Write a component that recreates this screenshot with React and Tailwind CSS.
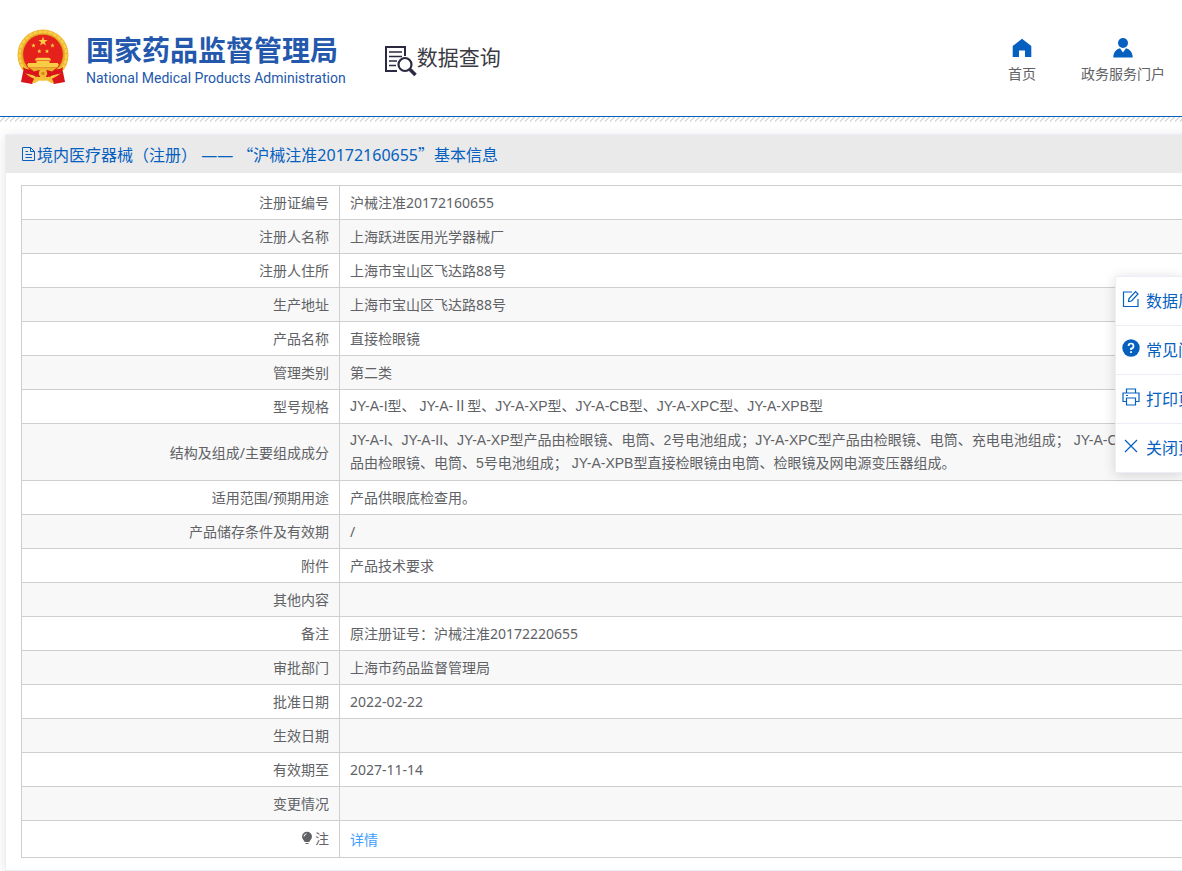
import React from "react";

const rows = [
  ["注册证编号", "沪械注准20172160655"],
  ["注册人名称", "上海跃进医用光学器械厂"],
  ["注册人住所", "上海市宝山区飞达路88号"],
  ["生产地址", "上海市宝山区飞达路88号"],
  ["产品名称", "直接检眼镜"],
  ["管理类别", "第二类"],
  ["型号规格", "JY-A-I型、 JY-A-Ⅱ型、JY-A-XP型、JY-A-CB型、JY-A-XPC型、JY-A-XPB型", true],
  [
    "结构及组成/主要组成成分",
    "JY-A-I、JY-A-II、JY-A-XP型产品由检眼镜、电筒、2号电池组成；JY-A-XPC型产品由检眼镜、电筒、充电电池组成； JY-A-CB型产品由检眼镜、电筒、5号电池组成； JY-A-XPB型直接检眼镜由电筒、检眼镜及网电源变压器组成。",
    true,
  ],
  ["适用范围/预期用途", "产品供眼底检查用。"],
  ["产品储存条件及有效期", "/"],
  ["附件", "产品技术要求"],
  ["其他内容", ""],
  ["备注", "原注册证号：沪械注准20172220655"],
  ["审批部门", "上海市药品监督管理局"],
  ["批准日期", "2022-02-22"],
  ["生效日期", ""],
  ["有效期至", "2027-11-14"],
  ["变更情况", ""],
];

const star = "M0-10 2.4-3.2 9.5-3.1 3.8 1.2 5.9 8.1 0 4 -5.9 8.1 -3.8 1.2 -9.5-3.1 -2.4-3.2Z";

function Emblem() {
  return (
    <svg viewBox="0 0 52 56" className="h-14 w-[52px] shrink-0" aria-hidden="true">
      <path d="M7 38 4 53 15 55 20 50H32L37 55 48 53 45 38Z" fill="#d9141c" />
      <circle cx="26" cy="26" r="25.5" fill="#eeb32c" />
      <circle cx="26" cy="26" r="23.4" fill="none" stroke="#f8cf4a" strokeWidth="2.4" strokeDasharray="4 1" />
      <circle cx="26" cy="25.5" r="20.3" fill="#e4211b" stroke="#dba01f" strokeWidth=".8" />
      <g fill="#f9cc45">
        <path d={star} transform="translate(26 12.5) scale(.5)" />
        <path d={star} transform="translate(16.5 16.5) scale(.24)" />
        <path d={star} transform="translate(35.5 16.5) scale(.24)" />
        <path d={star} transform="translate(22.3 22.3) scale(.24)" />
        <path d={star} transform="translate(30 22.3) scale(.24)" />
        <path d="M18 30.5 20 28.8H32L34 30.5V31.4H18ZM19.500 32H32.500V34H41V35H42L40.500 38.500H11.500L10 35H11V34H19.500Z" />
      </g>
      <path d="M6 38C10 42 17 39 22 43H30C35 39 42 42 46 38L45 44C40 46 36 45 33 48H19C16 45 12 46 7 44Z" fill="#d9141c" />
      <path d="M12 38.500H40L35 42.500 30 41 26 43.500 22 41 17 42.500Z" fill="#e9b02c" />
      <circle cx="26" cy="44.500" r="4.200" fill="#f3bd36" />
      <circle cx="26" cy="44.500" r="1.800" fill="#d58d16" />
      <path d="M17 50 20 47.500 24 49H28L32 47.500 35 50 37 54H34L30 51.500H22L18 54H15Z" fill="#f5c136" />
    </svg>
  );
}

function SearchDocIcon() {
  return (
    <svg viewBox="0 0 32 32" className="h-8 w-8 shrink-0" fill="none" stroke="#2b2a40" aria-hidden="true">
      <path d="M12 26H1V2H20V11" strokeWidth="2" />
      <path d="M4 7H17M4 11.500H17M4 16H12M4 20.500H11" strokeWidth="1.500" />
      <circle cx="20" cy="19.500" r="6.500" strokeWidth="2.200" />
      <path d="M25 24.500 30.500 30" strokeWidth="3.600" />
    </svg>
  );
}

function HomeIcon() {
  return (
    <svg viewBox="0 0 20 20" className="h-5 w-5" fill="#0560bf" aria-hidden="true">
      <path d="M10 .8 19.300 8V19H13V12.500H7V19H.7V8Z" />
    </svg>
  );
}

function UserIcon() {
  return (
    <svg viewBox="0 0 20 20" className="h-5 w-5" fill="#0560bf" aria-hidden="true">
      <circle cx="10" cy="5" r="5" />
      <path d="M.3 19.500C.3 14 3.300 11.200 7 10.200L10 14.500 13 10.200C16.700 11.200 19.700 14 19.700 19.500Z" />
    </svg>
  );
}

function DocumentIcon() {
  return (
    <svg viewBox="0 0 16 16" className="h-4 w-4 shrink-0" fill="none" stroke="#0560bf" aria-hidden="true">
      <path d="M1.500 1.500H9.500L13.500 5.500V14.500H1.500ZM9.500 1.500V5.500H13.500M4.500 5.500H7M4.500 8.500H11M4.500 11.500H11" />
    </svg>
  );
}

function BulbIcon() {
  return (
    <svg viewBox="0 0 12 14" className="h-3.5 w-3" aria-hidden="true">
      <path d="M6 .8A5 5 0 0 1 11 5.800C11 8.200 9 9 8.300 11H3.700C3 9 1 8.200 1 5.800A5 5 0 0 1 6 .8Z" fill="#606266" />
      <path d="M3 5.500A3 3 0 0 1 5.500 2.800" stroke="#fff" fill="none" />
      <path d="M4.500 12.500H7.500" stroke="#606266" />
    </svg>
  );
}

const tools = [
  {
    label: "数据质量",
    icon: (
      <g>
        <path d="M10 2H1.500V16.500H16V9" />
        <path d="M6.500 11.500 7 8.500 13.500 1.500 16 4 9.500 11Z" />
      </g>
    ),
  },
  {
    label: "常见问题",
    icon: (
      <g>
        <circle cx="9" cy="9" r="8.700" fill="#0560bf" stroke="none" />
        <path d="M6.500 7A2.500 2.500 0 1 1 9 9.500V11" stroke="#fff" strokeWidth="1.700" />
        <path d="M9 12.200V14" stroke="#fff" strokeWidth="1.800" />
      </g>
    ),
  },
  {
    label: "打印页面",
    icon: <path d="M4.500 5V1H13.500V5M4.500 13.500H1V5H17V13.500H13.500M4.500 10H13.500V17H4.500ZM4 7.500H6" />,
  },
  { label: "关闭页面", icon: <path d="M3 3 15 15M15 3 3 15" /> },
];

export default function App() {
  return (
    <div className="relative overflow-hidden bg-white font-['Noto_Sans','Noto_Sans_CJK_SC',sans-serif] text-sm text-[#606266]">
      <header className="flex h-[117px] items-start justify-between border-b border-[#0560bf] pr-[17px] pl-[17px]">
        <div className="flex items-start">
          <div className="flex gap-[17px] pt-[29px]">
            <Emblem />
            <div className="pt-1 whitespace-nowrap text-[#2458ac]">
              <h1 className="text-[28px] leading-[35px] font-bold">国家药品监督管理局</h1>
              <p className="font-[Roboto,sans-serif] text-sm leading-5">National Medical Products Administration</p>
            </div>
          </div>
          <div className="ml-[39px] flex pt-[45px]">
            <SearchDocIcon />
            <h2 className="text-[21px] leading-6 whitespace-nowrap text-[#3b3b43]">数据查询</h2>
          </div>
        </div>
        <nav className="flex gap-[45px] pt-[38px]">
          <a href="#home" className="flex flex-col items-center gap-1.5">
            <HomeIcon />
            <span className="leading-5">首页</span>
          </a>
          <a href="#portal" className="flex flex-col items-center gap-1.5">
            <UserIcon />
            <span className="leading-5">政务服务门户</span>
          </a>
        </nav>
      </header>
      <div className="h-[5px] bg-[linear-gradient(135deg,#fff_40%,#dadada_40%,#dadada_60%,#fff_60%)] bg-[length:5px_5px]" />

      <main className="mt-3 -mr-8 ml-[5px] border border-[#ebeef5] bg-white shadow-[0_2px_12px_rgba(0,0,0,0.1)]">
        <h3 className="flex h-[38px] items-center bg-[#eaeaea] pl-[15px] text-base leading-5 whitespace-pre text-[#0560bf]">
          <DocumentIcon />
          <span>
            境内医疗器械（注册） —— <span className="font-['Noto_Sans_CJK_SC',sans-serif]">“</span>
            沪械注准20172160655
            <span className="font-['Noto_Sans_CJK_SC',sans-serif]">”</span>基本信息
          </span>
        </h3>
        <div className="px-[15px] py-3">
          <table className="w-full border-collapse border border-[#cfcfcf] leading-[23px]">
            <tbody>
              {rows.map(([name, value, isModelList]) => (
                <tr key={name} className="h-[34px] even:bg-[#f8f8f8]">
                  <th scope="row" className="w-[318px] border border-[#cfcfcf] px-2.5 py-[5px] text-right font-normal">
                    {name}
                  </th>
                  <td
                    className={
                      isModelList
                        ? "border border-[#cfcfcf] py-[5px] pr-10 pl-2.5 font-['Liberation_Sans','Noto_Sans_CJK_SC',sans-serif]"
                        : "border border-[#cfcfcf] py-[5px] pr-10 pl-2.5"
                    }
                  >
                    {value}
                  </td>
                </tr>
              ))}
              <tr className="h-[37px]">
                <th scope="row" className="border border-[#cfcfcf] px-2.5 text-right font-normal">
                  <span className="inline-flex items-center gap-0.5">
                    <BulbIcon />注
                  </span>
                </th>
                <td className="border border-[#cfcfcf] px-2.5">
                  <a href="#detail" className="text-[#409eff]">详情</a>
                </td>
              </tr>
            </tbody>
          </table>
        </div>
      </main>

      <aside className="absolute top-[276px] right-0 w-[67px] overflow-hidden border border-r-0 border-[#ebeef5] bg-white shadow-[0_2px_12px_rgba(0,0,0,0.15)]">
        {tools.map((tool) => (
          <button
            key={tool.label}
            type="button"
            className="flex h-[49px] items-center gap-1.5 border-b border-[#ebeef5] pl-1.5 text-base whitespace-nowrap text-[#0560bf] last:h-12 last:border-b-0"
          >
            <svg viewBox="0 0 18 18" className="mb-1 h-[18px] w-[18px] shrink-0" fill="none" stroke="#0560bf" strokeWidth="1.2" aria-hidden="true">
              {tool.icon}
            </svg>
            {tool.label}
          </button>
        ))}
      </aside>
    </div>
  );
}
